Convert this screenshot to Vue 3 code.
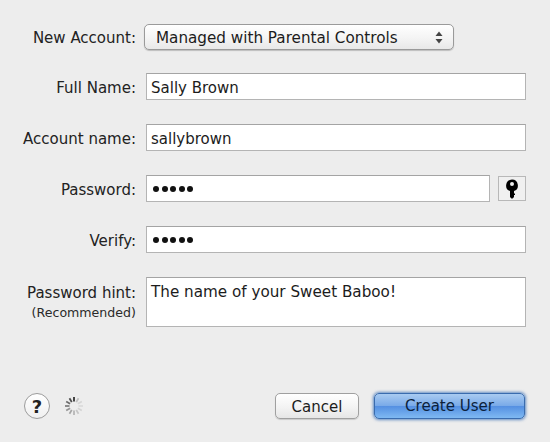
<script setup>
const rows = [
  { label: 'Full Name:', value: 'Sally Brown' },
  { label: 'Account name:', value: 'sallybrown' },
]

// spinner spokes, darkest just left of the top
const spokeColors = ['#333333', '#c0c0c0', '#d6d6d6', '#dcdcdc', '#d4d4d4', '#c6c6c6', '#b6b6b6', '#a6a6a6', '#969696', '#828282', '#6c6c6c', '#4e4e4e']
const spokes = spokeColors.map((color, i) => {
  const a = (i * 30 * Math.PI) / 180
  return {
    x1: 10 + Math.sin(a) * 4.5,
    y1: 10 - Math.cos(a) * 4.5,
    x2: 10 + Math.sin(a) * 9,
    y2: 10 - Math.cos(a) * 9,
    color,
  }
})
</script>

<template>
  <div class="sheet">
    <div class="form">
      <div class="row popup-row">
        <label class="label">New Account:</label>
        <div class="popup">
          <span>Managed with Parental Controls</span>
          <svg class="arrows" width="8" height="13" viewBox="0 0 8 13">
            <path d="M4 0.5 L7.5 5 H0.5 Z" fill="#444" />
            <path d="M4 12.5 L7.5 8 H0.5 Z" fill="#444" />
          </svg>
        </div>
      </div>

      <div v-for="row in rows" :key="row.label" class="row">
        <label class="label">{{ row.label }}</label>
        <div class="input">{{ row.value }}</div>
      </div>

      <div class="row">
        <label class="label">Password:</label>
        <div class="input dots"><i v-for="n in 5" :key="n"></i></div>
        <button class="key-btn">
          <svg width="14" height="20" viewBox="0 0 14 20">
            <path fill="#000" fill-rule="evenodd" d="M7 0.5 A6 6 0 0 1 9 12.1 V14.5 H10 V16 H9 V18 L7.6 19.5 H6.4 L5 18 V12.1 A6 6 0 0 1 7 0.5 Z M7 3 A2 2 0 1 0 7 7 A2 2 0 1 0 7 3 Z" />
          </svg>
        </button>
      </div>

      <div class="row">
        <label class="label">Verify:</label>
        <div class="input dots"><i v-for="n in 5" :key="n"></i></div>
      </div>

      <div class="row hint-row">
        <div class="label">
          <div>Password hint:</div>
          <div class="sub">(Recommended)</div>
        </div>
        <div class="input area">The name of your Sweet Baboo!</div>
      </div>
    </div>

    <div class="footer">
      <div class="help">?</div>
      <svg class="spinner" width="20" height="20" viewBox="0 0 20 20">
        <line v-for="(s, i) in spokes" :key="i" :x1="s.x1" :y1="s.y1" :x2="s.x2" :y2="s.y2" :stroke="s.color" stroke-width="1.8" />
      </svg>
      <button class="btn cancel">Cancel</button>
      <button class="btn primary">Create User</button>
    </div>
  </div>
</template>

<style>
html, body {
  margin: 0;
  background: #ededed;
}
</style>

<style scoped>
.sheet {
  width: 550px;
  height: 442px;
  box-sizing: border-box;
  padding: 24px 24px 22px 0;
  display: flex;
  flex-direction: column;
  background: #ededed;
  font-family: "DejaVu Sans", sans-serif;
  font-size: 15px;
  color: #1c1c1c;
  overflow: hidden;
}

.form {
  display: flex;
  flex-direction: column;
  gap: 24px;
}

.row {
  display: flex;
  align-items: center;
  height: 27px;
}

.popup-row {
  height: 26px;
  margin-bottom: -1px;
}

.label {
  width: 136px;
  margin-right: 10px;
  padding-top: 2px;
  flex-shrink: 0;
  text-align: right;
  white-space: nowrap;
  color: #222;
}

.popup-row .label {
  padding-top: 1px;
}

.popup {
  width: 310px;
  height: 26px;
  margin-left: -2px;
  box-sizing: border-box;
  padding: 1px 10px 0 11px;
  display: flex;
  align-items: center;
  justify-content: space-between;
  border: 1px solid #9a9a9a;
  border-radius: 5px;
  background: linear-gradient(#ffffff, #f4f4f4 55%, #e8e8e8);
  box-shadow: 0 1px 1px rgba(0, 0, 0, 0.2);
  font-size: 15.2px;
}

.input {
  flex: 1;
  height: 100%;
  box-sizing: border-box;
  padding: 2px 4px 0;
  display: flex;
  align-items: center;
  background: #fff;
  border: 1px solid #b4b4b4;
  border-top-color: #a4a4a4;
  color: #1c1c1c;
}

.dots {
  gap: 2.5px;
  padding: 0 4px 0 6px;
}

.dots i {
  width: 6px;
  height: 6px;
  border-radius: 50%;
  background: #111;
}

.key-btn {
  width: 28px;
  height: 25px;
  margin-left: 8px;
  padding: 0;
  display: flex;
  align-items: center;
  justify-content: center;
  background: #f0f0f0;
  border: 1px solid #b8b8b8;
}

.hint-row {
  height: 50px;
  align-items: flex-start;
}

.hint-row .label {
  padding-top: 7px;
}

.sub {
  margin-top: 3px;
  font-size: 12.6px;
  color: #2a2a2a;
}

.area {
  align-items: flex-start;
  padding-top: 5px;
  font-size: 15.2px;
}

.footer {
  margin-top: auto;
  display: flex;
  align-items: center;
  height: 28px;
}

.help {
  width: 26px;
  height: 26px;
  margin-left: 24px;
  box-sizing: border-box;
  display: flex;
  align-items: center;
  justify-content: center;
  border: 1.5px solid #9c9c9c;
  border-radius: 50%;
  background: linear-gradient(#fff, #f0f0f0);
  font-weight: 700;
  font-size: 18px;
  color: #222;
}

.spinner {
  margin-left: 14px;
}

.btn {
  height: 26px;
  padding: 1px 0 0;
  font: inherit;
  border-radius: 5px;
  color: #1c1c1c;
}

.cancel {
  width: 84px;
  margin-left: auto;
  border: 1px solid #a0a0a0;
  background: linear-gradient(#ffffff, #f3f3f3 55%, #e6e6e6);
  box-shadow: 0 1px 1px rgba(0, 0, 0, 0.15);
}

.primary {
  width: 151px;
  margin-left: 15px;
  margin-right: 1px;
  padding-top: 0;
  border: 1px solid #3a6cae;
  color: #0b1f3c;
  background: linear-gradient(#a9cbf1, #78a9e8 50%, #5590e2 52%, #7fb9f2);
  box-shadow: 0 0 3px 1px rgba(50, 105, 180, 0.75);
}
</style>
